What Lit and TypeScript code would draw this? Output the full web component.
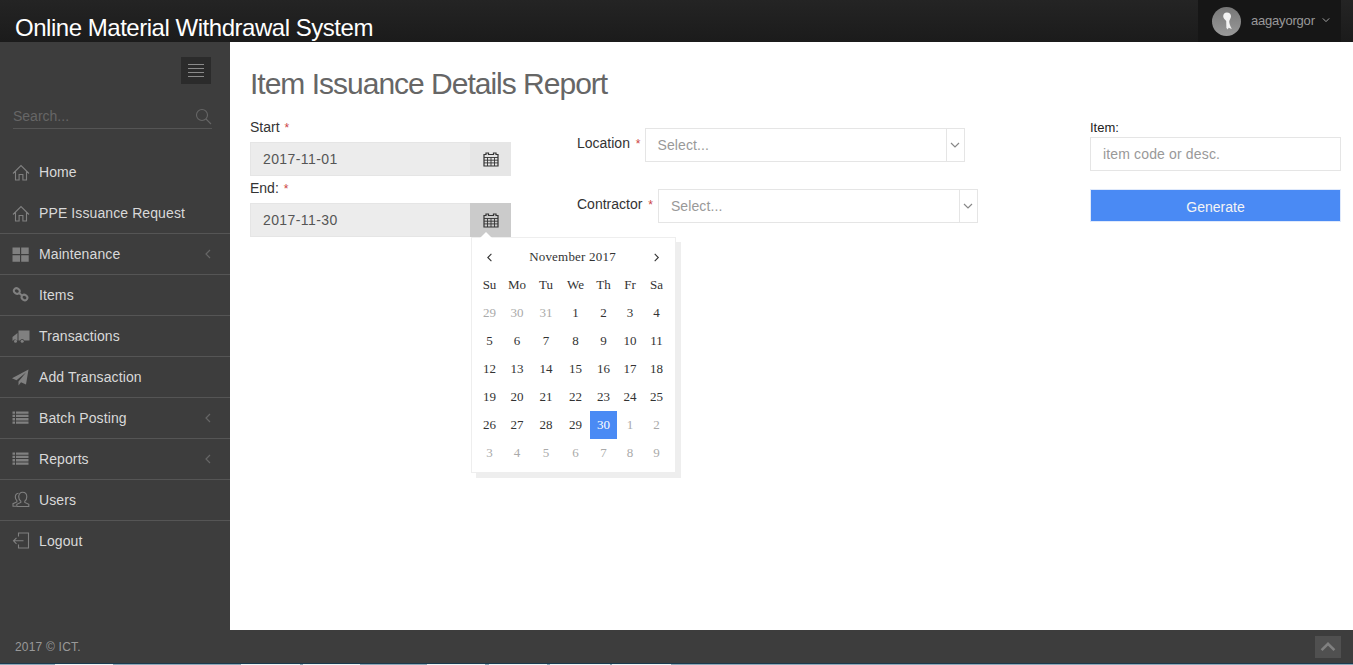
import { LitElement, html, css, svg } from "lit";
import { customElement } from "lit/decorators.js";

const icons: Record<string, unknown> = {
  home: svg`<path d="M1 10.500 9 2.500l8 8M3.500 8.500V17h3.600v-5.500h3.800V17h3.600V8.500" fill="none" stroke="currentColor" stroke-width="1.100"/>`,
  grid: svg`<path d="M.500 2.500h7.500v6.500H.500zM9.200 2.500h7.500v6.500H9.200zM.500 10.200h7.500v6.500H.500zM9.200 10.200h7.500v6.500H9.200z" fill="currentColor"/>`,
  link: svg`<g fill="none" stroke="currentColor" stroke-width="2"><ellipse cx="4.800" cy="5" rx="3" ry="2.600" transform="rotate(35 4.800 5)"/><ellipse cx="12.500" cy="11.500" rx="3" ry="2.600" transform="rotate(35 12.500 11.500)"/><path d="M7 7l3 2.500"/></g>`,
  truck: svg`<path d="M6.500 3.500h11v10h-5.200a2.200 2.200 0 0 0-4.200 0H6.500zM5.500 6v7.500h-.700a2.200 2.200 0 0 0-3.800.200H.500V10z" fill="currentColor"/><circle cx="3.500" cy="14.300" r="1.500" fill="currentColor"/><circle cx="10.200" cy="14.300" r="1.500" fill="currentColor"/>`,
  plane: svg`<path d="M16.500 1.500 14 16.500 9 14.300 6.500 17.500v-4L14 4.500 4.500 12.300 0 10.300z" fill="currentColor"/>`,
  list: svg`<path d="M.500 2.500H3v2.300H.500zM4 2.500h12.500v2.300H4zM.500 5.800H3v2.300H.500zM4 5.800h12.500v2.300H4zM.500 9.100H3v2.300H.500zM4 9.100h12.500v2.300H4zM.500 12.400H3v2.300H.500zM4 12.400h12.500v2.300H4z" fill="currentColor"/>`,
  users: svg`<g fill="none" stroke="currentColor" stroke-width="1.100"><path d="M10.500 1.200c2.600 0 4.300 1.900 4.300 4.600 0 1.800-.8 3.500-2 4.300v1.400l4 1.800v2.200H4.800v-2.200l4-1.800v-1.400c-1.300-.8-2.100-2.500-2.100-4.300 0-2.700 1.700-4.600 3.800-4.600z"/><path d="M6.500 2.200C4.500 2.500 3.300 4 3.300 6c0 1.500.6 2.800 1.600 3.600v1.300L1 12.700v2.500h3"/></g>`,
  logout: svg`<g fill="none" stroke="currentColor" stroke-width="1.100"><path d="M6.500 4.500V1h10v15h-10v-3.500"/><path d="M11.500 8.800H1.500M4.500 5.800l-3 3 3 3"/></g>`,
  cal: svg`<path d="M1 3.500h2V2h2.500v1.500h5V2H13v1.500h2V15H1z" fill="none" stroke="currentColor" stroke-width="1.200"/><path d="M1 6.500h14M1 9.200h14M1 11.900h14M4.500 6.500V15M8 6.500V15M11.500 6.500V15" stroke="currentColor" stroke-width=".900" fill="none"/>`,
};

const nav = [
  { t: "Home", i: "home" },
  { t: "PPE Issuance Request", i: "home", b: true },
  { t: "Maintenance", i: "grid", b: true, c: true },
  { t: "Items", i: "link", b: true },
  { t: "Transactions", i: "truck", b: true },
  { t: "Add Transaction", i: "plane", b: true },
  { t: "Batch Posting", i: "list", b: true, c: true },
  { t: "Reports", i: "list", b: true, c: true },
  { t: "Users", i: "users", b: true },
  { t: "Logout", i: "logout" },
];

const weeks = [
  [29, 30, 31, 1, 2, 3, 4],
  [5, 6, 7, 8, 9, 10, 11],
  [12, 13, 14, 15, 16, 17, 18],
  [19, 20, 21, 22, 23, 24, 25],
  [26, 27, 28, 29, 30, 1, 2],
  [3, 4, 5, 6, 7, 8, 9],
];

// Taskbar slivers peeking out below the footer: [gap before, width]
const slivers = [
  [55, 58],
  [128, 59],
  [3, 57],
  [67, 58],
  [4, 58],
  [3, 60],
  [2, 59],
];

@customElement("app-root")
export class AppRoot extends LitElement {
  static styles = css`
    :host {
      display: flex;
      flex-direction: column;
      width: 1353px;
      height: 665px;
      overflow: hidden;
      font-family: "Liberation Sans", Arial, sans-serif;
      font-size: 14px;
      color: #333;
      background: #fff;
    }
    .top {
      height: 42px;
      flex: none;
      display: flex;
      justify-content: space-between;
      background: linear-gradient(#242424, #1b1b1b);
      padding-right: 12px;
    }
    .brand {
      color: #fff;
      font-size: 24px;
      letter-spacing: -0.47px;
      line-height: 28px;
      padding: 14px 0 0 15px;
    }
    .user {
      width: 143px;
      display: flex;
      align-items: center;
      background: #161616;
      color: #999;
      font-size: 13px;
      letter-spacing: -0.2px;
      padding: 0 0 2px 14px;
      box-sizing: border-box;
      gap: 10px;
    }
    .avatar { width: 29px; height: 29px; flex: none; margin-top: 2px; }
    .user .chev { margin-left: -3px; color: #aaa; }
    .mid { flex: 1; display: flex; min-height: 0; }
    .side {
      width: 230px;
      flex: none;
      background: #3d3d3d;
      display: flex;
      flex-direction: column;
    }
    .toggle-row { display: flex; justify-content: flex-end; padding: 15px 19px 0 0; }
    .toggle {
      width: 30px;
      height: 27px;
      background: #2b2b2b;
      display: flex;
      flex-direction: column;
      justify-content: center;
      align-items: center;
      gap: 3px;
    }
    .toggle i { display: block; width: 16px; height: 1px; background: #8a8a8a; }
    .search {
      margin: 18px 18px 0 13px;
      height: 26px;
      border-bottom: 1px solid #555;
      display: flex;
      justify-content: space-between;
      align-items: center;
      color: #666;
    }
    .search span { padding-top: 2px; }
    .search svg { margin-top: 2px; }
    .nav { margin-top: 23px; }
    .item {
      height: 41px;
      box-sizing: border-box;
      display: flex;
      align-items: center;
      padding: 0 16px 1px 12px;
      color: #d9d9d9;
      letter-spacing: 0.1px;
    }
    .item.b { padding-bottom: 0; border-bottom: 1px solid #555; }
    .item svg.ic { width: 18px; height: 18px; color: #808080; margin-right: 9px; flex: none; }
    .item .lbl { flex: 1; }
    .item svg.back { color: #666; }
    .main { flex: 1; padding: 0 12px 0 20px; min-width: 0; }
    h1 {
      margin: 0;
      padding-top: 24px;
      font-weight: 400;
      font-size: 30px;
      letter-spacing: -1px;
      line-height: 36px;
      color: #666;
    }
    .form { display: flex; margin-top: 15px; }
    .col1 { width: 261px; flex: none; position: relative; }
    .col2 { width: 401px; flex: none; margin-left: 66px; padding-top: 11px; }
    .col3 { width: 251px; flex: none; margin-left: 112px; padding-top: 2px; }
    .lab { display: block; color: #333; line-height: 20px; }
    .req { color: #c44; font-size: 12px; margin-left: 2px; }
    .col1 .lab { height: 25px; }
    .col1 .lab .req { margin-left: 1px; }
    .date {
      display: flex;
      height: 34px;
      box-sizing: border-box;
      background: #ececec;
      border: 1px solid #e5e5e5;
      color: #555;
      line-height: 32px;
    }
    .date .v { flex: 1; padding-left: 12px; letter-spacing: 0.4px; }
    .date .add {
      width: 41px;
      display: flex;
      align-items: center;
      justify-content: center;
      background: #e6e6e6;
      margin: -1px -1px -1px 0;
      color: #333;
    }
    .date .add.on { background: #cbcbcb; }
    .col1 .end-lab { margin-top: 2px; height: 25px; line-height: 20px; }
    .sel-row { display: flex; align-items: flex-start; height: 61px; }
    .sel-row .lab { line-height: 30px; white-space: nowrap; }
    .sel {
      display: flex;
      height: 34px;
      width: 320px;
      box-sizing: border-box;
      border: 1px solid #e5e5e5;
      color: #999;
      line-height: 32px;
    }
    .sel .v { flex: 1; padding-left: 12px; letter-spacing: 0.1px; }
    .sel .car {
      width: 17px;
      border-left: 1px solid #e5e5e5;
      display: flex;
      align-items: center;
      justify-content: center;
      color: #888;
    }
    .loc .sel { margin-left: 4px; }
    .con .sel { margin-left: 5px; }
    .col3 .lab { line-height: 18px; height: 18px; color: #222; font-size: 13px; }
    .txt {
      height: 34px;
      box-sizing: border-box;
      border: 1px solid #e5e5e5;
      padding-left: 12px;
      line-height: 32px;
      color: #999;
      letter-spacing: 0.15px;
    }
    .btn {
      margin-top: 18px;
      height: 33px;
      box-sizing: border-box;
      background: #4a8af4;
      border: 1px solid #dfe9fb;
      color: #f4f4f4;
      text-align: center;
      padding-top: 1px;
      line-height: 32px;
    }
    .cal {
      position: absolute;
      left: 221px;
      top: 120px;
      width: 205px;
      height: 236px;
      box-sizing: border-box;
      background: #fff;
      border: 1px solid #eee;
      box-shadow: 5px 5px 0 #eee;
      font-family: "Liberation Serif", "Times New Roman", serif;
      font-size: 13px;
      color: #333;
      padding: 5px 5px 0 4px;
    }
    .cal::before {
      content: "";
      position: absolute;
      left: 8px;
      top: -6px;
      width: 0;
      height: 0;
      border-left: 6px solid transparent;
      border-right: 6px solid transparent;
      border-bottom: 6px solid #fff;
    }
    .head {
      display: flex;
      height: 28px;
      align-items: center;
      justify-content: space-between;
      padding: 0 9px 0 10px;
      letter-spacing: 0.2px;
    }
    .head span { margin-left: -2px; }
    .days {
      display: grid;
      grid-template-columns: 27px 28px 30px 29px 27px 26px 27px;
      grid-auto-rows: 28px;
    }
    .days span { display: flex; align-items: center; justify-content: center; }
    .days .o { color: #aaa; }
    .days .a { background: #4a8af4; color: #fff; }
    .foot {
      height: 33px;
      flex: none;
      background: #3d3d3d;
      color: #999;
      font-size: 12px;
      letter-spacing: 0.2px;
      display: flex;
      justify-content: space-between;
      align-items: center;
      padding: 0 12px 0 15px;
    }
    .up {
      width: 26px;
      height: 22px;
      background: #505050;
      display: flex;
      align-items: center;
      justify-content: center;
      color: #808080;
    }
    .strip {
      height: 2px;
      flex: none;
      display: flex;
      box-sizing: border-box;
      background: #8fa9b8;
      border-top: 1px solid #1b3a4e;
    }
    .strip i { display: block; height: 1px; background: #eef2f4; }
  `;

  private chev(dir: "l" | "r" | "d" | "u", size = 9, sw = 1.2) {
    const d = { l: "M6 1 2 5l4 4", r: "M3 1l4 4-4 4", d: "M1 3l4 4 4-4", u: "M1 7l4-4 4 4" }[dir];
    return html`<svg class="back chev" width=${size} height=${size} viewBox="0 0 10 10"><path d=${d} fill="none" stroke="currentColor" stroke-width=${sw}/></svg>`;
  }

  private calIcon() {
    return html`<svg width="16" height="16" viewBox="0 0 16 16">${icons.cal}</svg>`;
  }

  render() {
    return html`
      <div class="top">
        <div class="brand">Online Material Withdrawal System</div>
        <div class="user">
          <svg class="avatar" viewBox="0 0 29 29"><defs><linearGradient id="av" x1="0" y1="0" x2="0" y2="1"><stop offset="0" stop-color="#777"/><stop offset="1" stop-color="#999"/></linearGradient></defs><circle cx="14.500" cy="14.500" r="14.500" fill="url(#av)"/><path d="M14.800 5.500c2.600 0 4.200 1.700 4.200 3.800 0 2-1.300 3.200-1.700 4.800-.2 1.500.4 3.500 1.300 5.400l1.200 2.500-3.200-1.200-.8 1.800-1.400-1.700-.2-6.800c-1-1.300-3-2.500-3-4.800 0-2.100 1.500-3.800 3.600-3.800z" fill="#f2f2f2"/></svg>
          <span>aagayorgor</span>
          ${this.chev("d", 8)}
        </div>
      </div>
      <div class="mid">
        <div class="side">
          <div class="toggle-row"><div class="toggle"><i></i><i></i><i></i><i></i></div></div>
          <div class="search">
            <span>Search...</span>
            <svg width="17" height="17" viewBox="0 0 17 17"><g fill="none" stroke="#666" stroke-width="1.100"><circle cx="7" cy="7" r="5.500"/><path d="M11 11l5 5"/></g></svg>
          </div>
          <div class="nav">
            ${nav.map(
              (n) => html`<div class="item ${n.b ? "b" : ""}">
                <svg class="ic" viewBox="0 0 18 18">${icons[n.i]}</svg>
                <span class="lbl">${n.t}</span>
                ${n.c ? this.chev("l", 10) : ""}
              </div>`
            )}
          </div>
        </div>
        <div class="main">
          <h1>Item Issuance Details Report</h1>
          <div class="form">
            <div class="col1">
              <span class="lab">Start <span class="req">*</span></span>
              <div class="date"><span class="v">2017-11-01</span><span class="add">${this.calIcon()}</span></div>
              <span class="lab end-lab">End: <span class="req">*</span></span>
              <div class="date"><span class="v">2017-11-30</span><span class="add on">${this.calIcon()}</span></div>
              <div class="cal">
                <div class="head">${this.chev("l", 9)}<span>November 2017</span>${this.chev("r", 9)}</div>
                <div class="days">
                  ${["Su", "Mo", "Tu", "We", "Th", "Fr", "Sa"].map((d) => html`<span>${d}</span>`)}
                  ${weeks.map((w, r) =>
                    w.map((d, c) => {
                      const other = (r === 0 && d > 20) || (r >= 4 && d < 10);
                      const active = r === 4 && c === 4;
                      return html`<span class="${other ? "o" : ""} ${active ? "a" : ""}">${d}</span>`;
                    })
                  )}
                </div>
              </div>
            </div>
            <div class="col2">
              <div class="sel-row loc">
                <span class="lab">Location <span class="req">*</span></span>
                <div class="sel"><span class="v">Select...</span><span class="car">${this.chev("d", 10)}</span></div>
              </div>
              <div class="sel-row con">
                <span class="lab">Contractor <span class="req">*</span></span>
                <div class="sel"><span class="v">Select...</span><span class="car">${this.chev("d", 10)}</span></div>
              </div>
            </div>
            <div class="col3">
              <span class="lab">Item:</span>
              <div class="txt">item code or desc.</div>
              <div class="btn">Generate</div>
            </div>
          </div>
        </div>
      </div>
      <div class="foot">
        <span>2017 © ICT.</span>
        <span class="up">${this.chev("u", 16, 1.6)}</span>
      </div>
      <div class="strip">
        ${slivers.map(([g, w]) => html`<i style="margin-left:${g}px;width:${w}px"></i>`)}
      </div>
    `;
  }
}
